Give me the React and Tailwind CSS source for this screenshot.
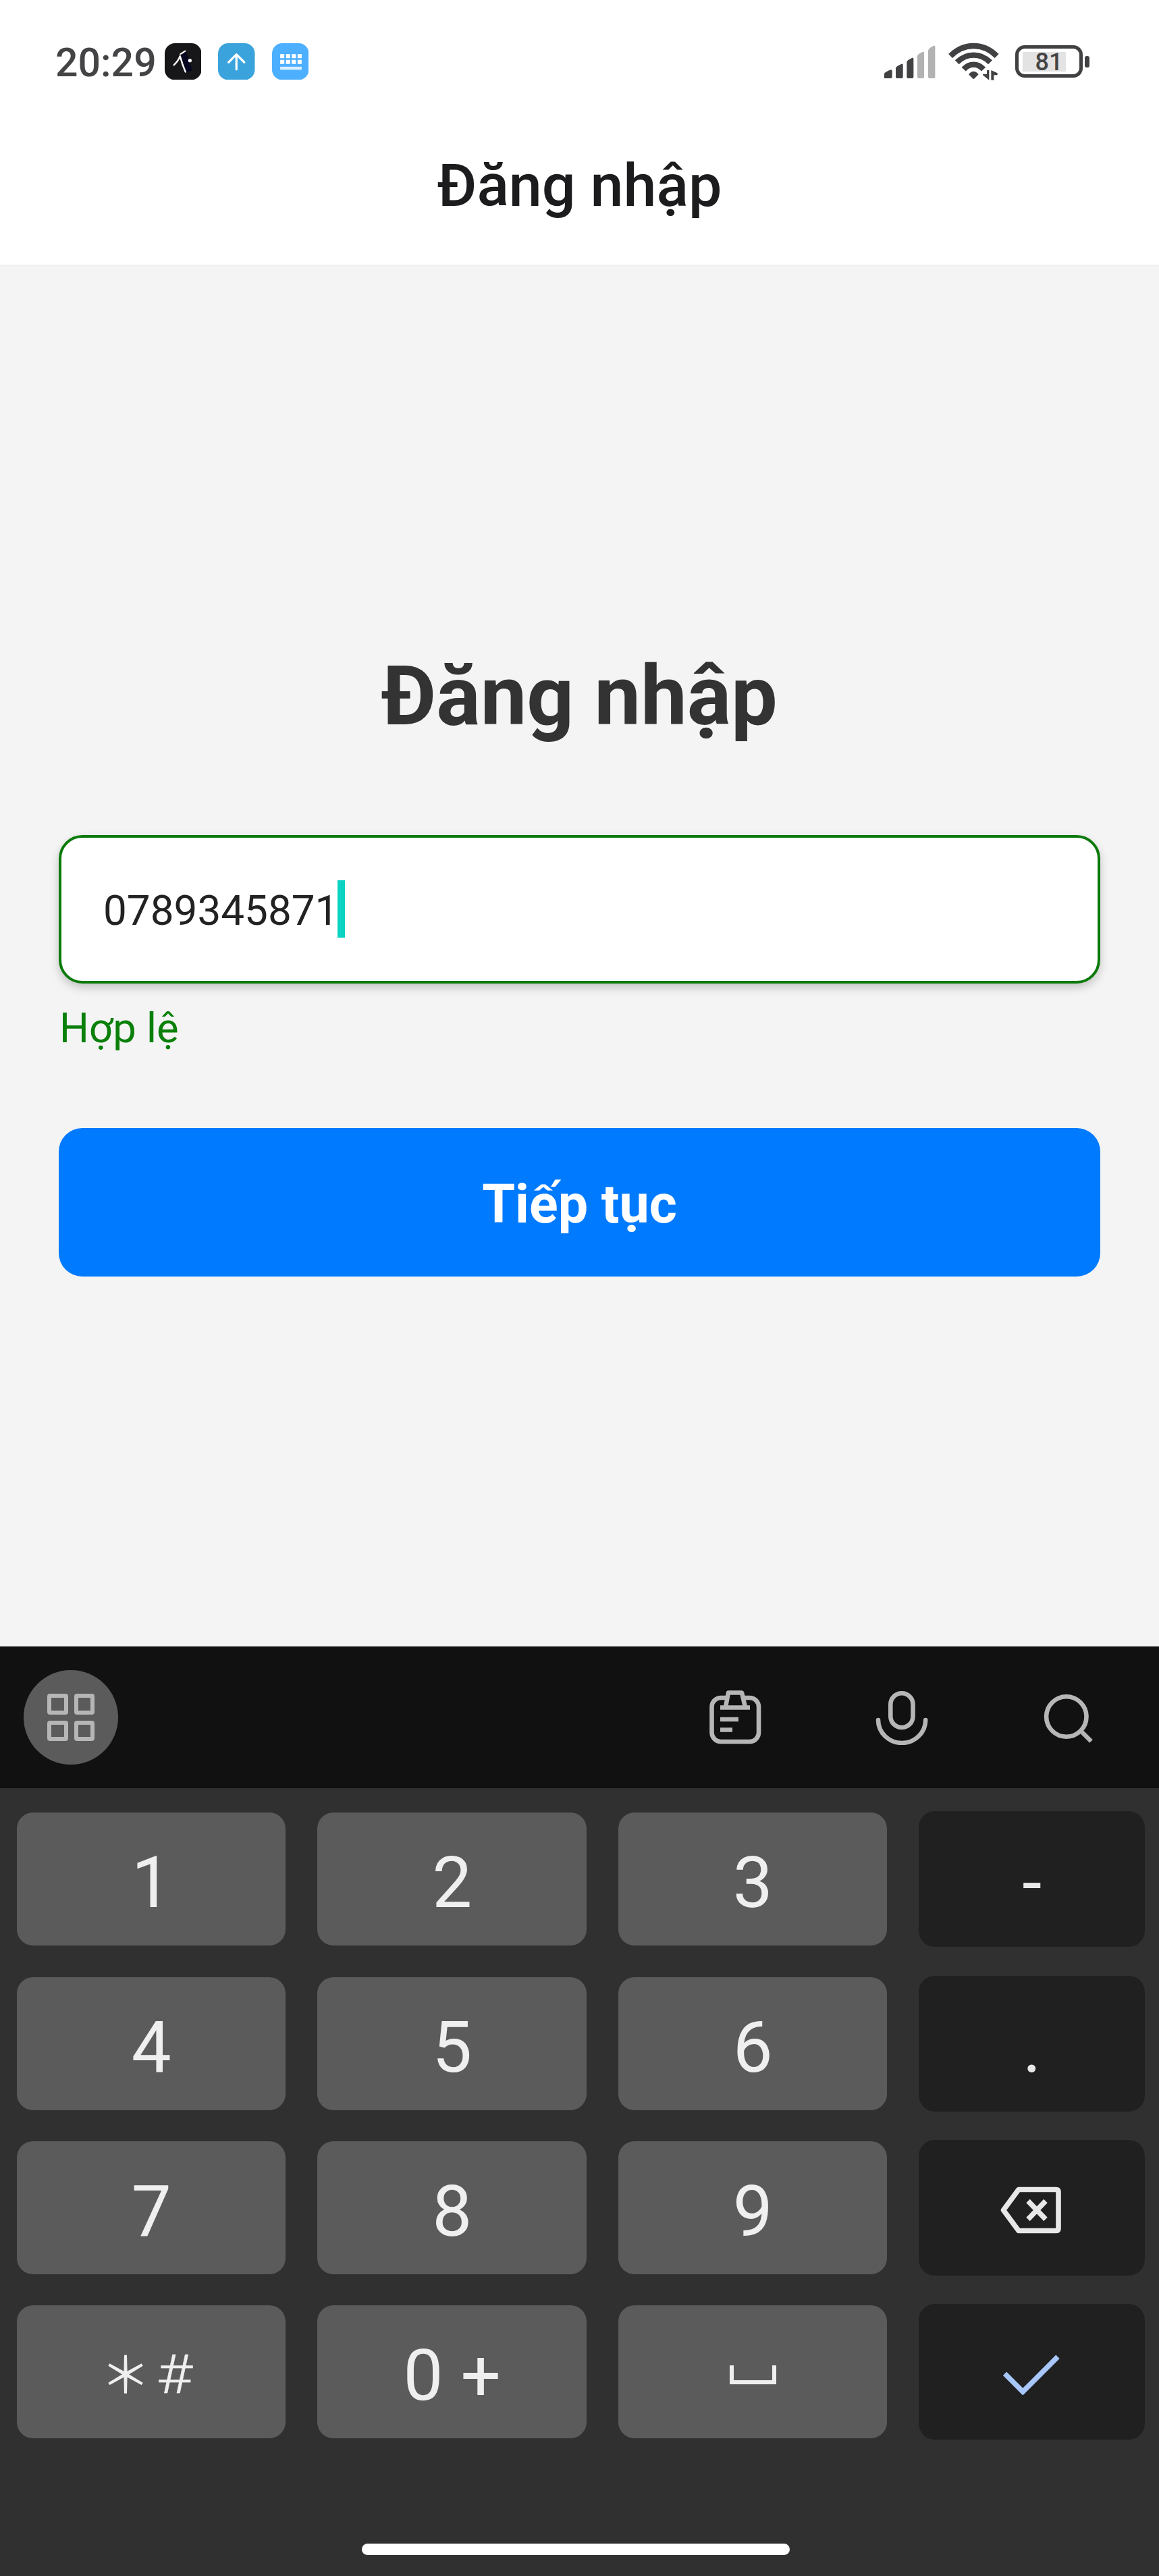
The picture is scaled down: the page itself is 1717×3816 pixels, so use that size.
import React from "react";

function AppBadges() {
  return (
    <div className="ml-[12px] flex gap-[25px]">
      <svg className="size-[54.5px]" viewBox="0 0 54 54">
        <rect width="54" height="54" rx="15" fill="#171719" />
        <path d="M23 17 L31 12 L35 22 L40 40 L31 43z" fill="#05051f" />
        <path d="M23 16 Q28 13 30 11.5" stroke="#fff" strokeWidth="2" fill="none" strokeLinecap="round" />
        <path d="M13.5 32 Q20 26 22.5 19 Q26 32 30.5 42" stroke="#fff" strokeWidth="2.4" fill="none" strokeLinecap="round" strokeLinejoin="round" />
        <circle cx="37" cy="25.5" r="2.6" fill="#fff" />
      </svg>
      <svg className="size-[54.5px]" viewBox="0 0 54 54">
        <rect width="54" height="54" rx="15" fill="#3ba3dc" />
        <path d="M27 38.5 V16.5 M15.5 28 L27 16.5 L38.5 28" stroke="#fff" strokeWidth="3.2" fill="none" strokeLinecap="round" strokeLinejoin="round" />
      </svg>
      <svg className="size-[54.5px]" viewBox="0 0 54 54">
        <rect width="54" height="54" rx="15" fill="#4dafff" />
        <g fill="#fff">
          {[12, 20.5, 29, 37.5].map((x) => (
            <React.Fragment key={x}>
              <rect x={x} y="16" width="6" height="6" />
              <rect x={x} y="24.5" width="6" height="6" />
            </React.Fragment>
          ))}
        </g>
        <rect x="12" y="34.5" width="31.5" height="4.5" fill="#d9eeff" />
      </svg>
    </div>
  );
}

function StatusBar() {
  return (
    <div className="flex h-[158px] items-start justify-between pt-[57px] pr-[103px] pl-[82px] text-[#444446]">
      <div className="flex h-[68px] items-center">
        <span className="pt-[4px] text-[59px] leading-[68px] font-medium">20:29</span>
        <AppBadges />
      </div>
      <div className="flex h-[68px] items-center">
        <svg className="h-[49px] w-[76px]" viewBox="62 81 228 147">
          <g fill="#414143">
            <path d="M62 228 V208 Q64 200 92 190 Q97 190 97 195 V222 Q97 228 91 228z" />
            <path d="M113 222 V182 Q114 174 139 164 Q145 163 145 168 V222 Q145 228 139 228 H119 Q113 228 113 222z" />
            <path d="M162 222 V156 Q163 147 186 137 Q192 136 192 142 V222 Q192 228 186 228 H168 Q162 228 162 222z" />
          </g>
          <g fill="#b2b2b2">
            <path d="M209 222 V129 Q210 120 233 110 Q239 109 239 115 V222 Q239 228 233 228 H215 Q209 228 209 222z" />
            <path d="M257 222 V104 Q258 95 281 83 Q288 81 288 88 V222 Q288 228 282 228 H263 Q257 228 257 222z" />
          </g>
        </svg>
        <svg className="ml-[18px] h-[58.3px] w-[76.7px]" viewBox="345 68 230 175">
          <g fill="none" stroke="#414143" strokeWidth="25">
            <path d="M357 131 Q402 86 460 86 Q518 86 563 131" />
            <path d="M386 159 Q418 127 460 127 Q502 127 534 159" />
            <path d="M416 190 Q435 169 460 169 Q485 169 504 190" />
          </g>
          <path d="M438 213 Q460 186 482 213 L464 231 Q460 235 456 231z" fill="#414143" />
          <path d="M519 194 H529 V238 L501 216 V211 H519z M538 194 L566 207 V216 H550 V238 H538z" fill="#414143" />
        </svg>
        <div className="relative ml-[23px] flex h-[48px] w-[100px] items-center justify-center rounded-[14px] border-[5px] border-[#414143]">
          <div className="absolute top-[4.5px] left-[6px] h-[29px] w-[64px] bg-[#e3e3e3]" />
          <span className="relative pt-[2px] text-[36px] leading-none font-medium">81</span>
        </div>
        <div className="ml-[3px] h-[17px] w-[7px] rounded-[3px] bg-[#414143]" />
      </div>
    </div>
  );
}

function Toolbar() {
  return (
    <div className="flex h-[210px] items-center justify-between bg-[#111111] pr-[96px] pl-[35px]">
      <div className="flex size-[140px] items-center justify-center rounded-full bg-[#5b5b5b]">
        <div className="grid grid-cols-2 gap-[9px]">
          {[0, 1, 2, 3].map((i) => (
            <div key={i} className="size-[30.5px] rounded-[4px] border-[6.5px] border-[#b6b6b6]" />
          ))}
        </div>
      </div>
      <div className="flex items-center gap-[168.5px]">
        <svg className="h-[82px] w-[78px]" viewBox="0 0 78 82" fill="none" stroke="#b6b6b6" strokeWidth="6.6">
          <path d="M27 12 H18 A13.5 13.5 0 0 0 4.5 25.5 V63.5 A13.5 13.5 0 0 0 18 77 H60.5 A13.5 13.5 0 0 0 74 63.5 V25.5 A13.5 13.5 0 0 0 60.5 12 H51" />
          <path d="M24.5 28 L29 4.5 H49 L54.5 28" strokeLinejoin="round" />
          <path d="M17 26.5 H61 M17 44 H44 M17 59.5 H35" />
        </svg>
        <svg className="h-[82px] w-[78px]" viewBox="1296.5 2502 78 82" fill="none" stroke="#b6b6b6" strokeWidth="6.6">
          <rect x="1318.8" y="2507.3" width="33.2" height="50.7" rx="16.6" />
          <path d="M1300.5 2547 A35.1 34 0 0 0 1370.7 2547" strokeLinecap="round" />
        </svg>
        <svg className="h-[82px] w-[78px]" viewBox="1543 2502 78 82" fill="none" stroke="#b6b6b6" strokeWidth="6.6">
          <circle cx="1579.8" cy="2542" r="29.7" />
          <path d="M1601 2563 L1616.5 2578.5" />
        </svg>
      </div>
    </div>
  );
}

function Key({ dark, shift = true, children }) {
  return (
    <div
      className={
        "flex items-center justify-center text-[105px] leading-none " +
        (dark ? "h-[201px] rounded-[24px] bg-[#202020] text-[#e8e8e8] " : "my-[2px] h-[197px] rounded-[24px] bg-[#5b5b5b] text-[#efefef] ") +
        (shift ? "pt-[12px]" : "")
      }
    >
      {children}
    </div>
  );
}

function Keyboard() {
  return (
    <div className="h-[1377px] bg-[#303030]">
      <Toolbar />
      <div className="grid grid-cols-[398px_399px_398px_335px] gap-x-[47px] gap-y-[42.3px] pt-[34.3px] pl-[25.3px]">
        <Key>1</Key>
        <Key>2</Key>
        <Key>3</Key>
        <Key dark>-</Key>
        <Key>4</Key>
        <Key>5</Key>
        <Key>6</Key>
        <Key dark>.</Key>
        <Key>7</Key>
        <Key>8</Key>
        <Key>9</Key>
        <Key dark shift={false}>
          <svg className="mt-[7px] mr-[3px] h-[70px] w-[92px]" viewBox="0 0 92 70" fill="none" stroke="#e8e8e8" strokeWidth="7.6">
            <path d="M28 4.5 H83.5 Q87 4.5 87 8 V62 Q87 65.5 83.5 65.5 H28 L5.5 35z" strokeLinejoin="round" />
            <path d="M42 21.5 L68 48.5 M68 21.5 L42 48.5" />
          </svg>
        </Key>
        <Key shift={false}>
          <span className="mr-[18px] flex items-center gap-[12px] text-[80px] font-light">
            <span className="font-['Noto_Sans_CJK_SC',sans-serif] text-[73px] [-webkit-text-stroke:1.2px_#efefef]">＊</span>
            <span className="scale-x-115 pt-[9px] [-webkit-text-stroke:0.4px_#efefef]">#</span>
          </span>
        </Key>
        <Key>0 +</Key>
        <Key shift={false}>
          <div className="mt-[9px] h-[28px] w-[69px] border-x-[6px] border-b-[6px] border-[#efefef]" />
        </Key>
        <Key dark shift={false}>
          <svg className="mt-[9px] mr-[2px] h-[60px] w-[84px]" viewBox="1486 3488 84 60" fill="none" stroke="#a8c7fa" strokeWidth="7.6">
            <path d="M1488.5 3516.2 L1515.3 3543 L1567 3491.3" />
          </svg>
        </Key>
      </div>
      <div className="mt-[154px] ml-[536px] h-[17px] w-[634px] rounded-full bg-white" />
    </div>
  );
}

export default function App() {
  return (
    <div className="flex h-[3816px] w-[1717px] flex-col overflow-hidden bg-[#f4f4f4] font-[Roboto,sans-serif]">
      <header className="h-[392px] bg-white">
        <StatusBar />
        <h1 className="text-center text-[88px] leading-[234px] font-medium text-[#1c1c1e]">Đăng nhập</h1>
      </header>
      <main className="h-[2047px] border-t-[3px] border-[#f1f1f1] px-[87px] pt-[564px]">
        <h2 className="text-center text-[122.3px] leading-[145px] font-bold text-[#333333]">Đăng nhập</h2>
        <div className="mt-[133px] flex h-[220px] items-center rounded-[35px] border-[4.4px] border-[#0b7a0b] bg-white pl-[61px] shadow-[0_6px_14px_rgba(0,0,0,0.2)]">
          <span className="pt-[4px] pl-[1px] text-[62px] leading-none text-[#222222]">0789345871</span>
          <div className="-mt-[2px] -ml-[1px] h-[85px] w-[10.5px] bg-[#0cd3c2]" />
        </div>
        <p className="mt-[30px] pl-[1px] text-[61.6px] leading-[72px] text-[#0a800a]">Hợp lệ</p>
        <button className="mt-[112px] flex h-[220px] w-full items-center justify-center rounded-[35px] bg-[#007aff] pt-[6px] text-[79px] leading-none font-bold text-white">
          Tiếp tục
        </button>
      </main>
      <Keyboard />
    </div>
  );
}
